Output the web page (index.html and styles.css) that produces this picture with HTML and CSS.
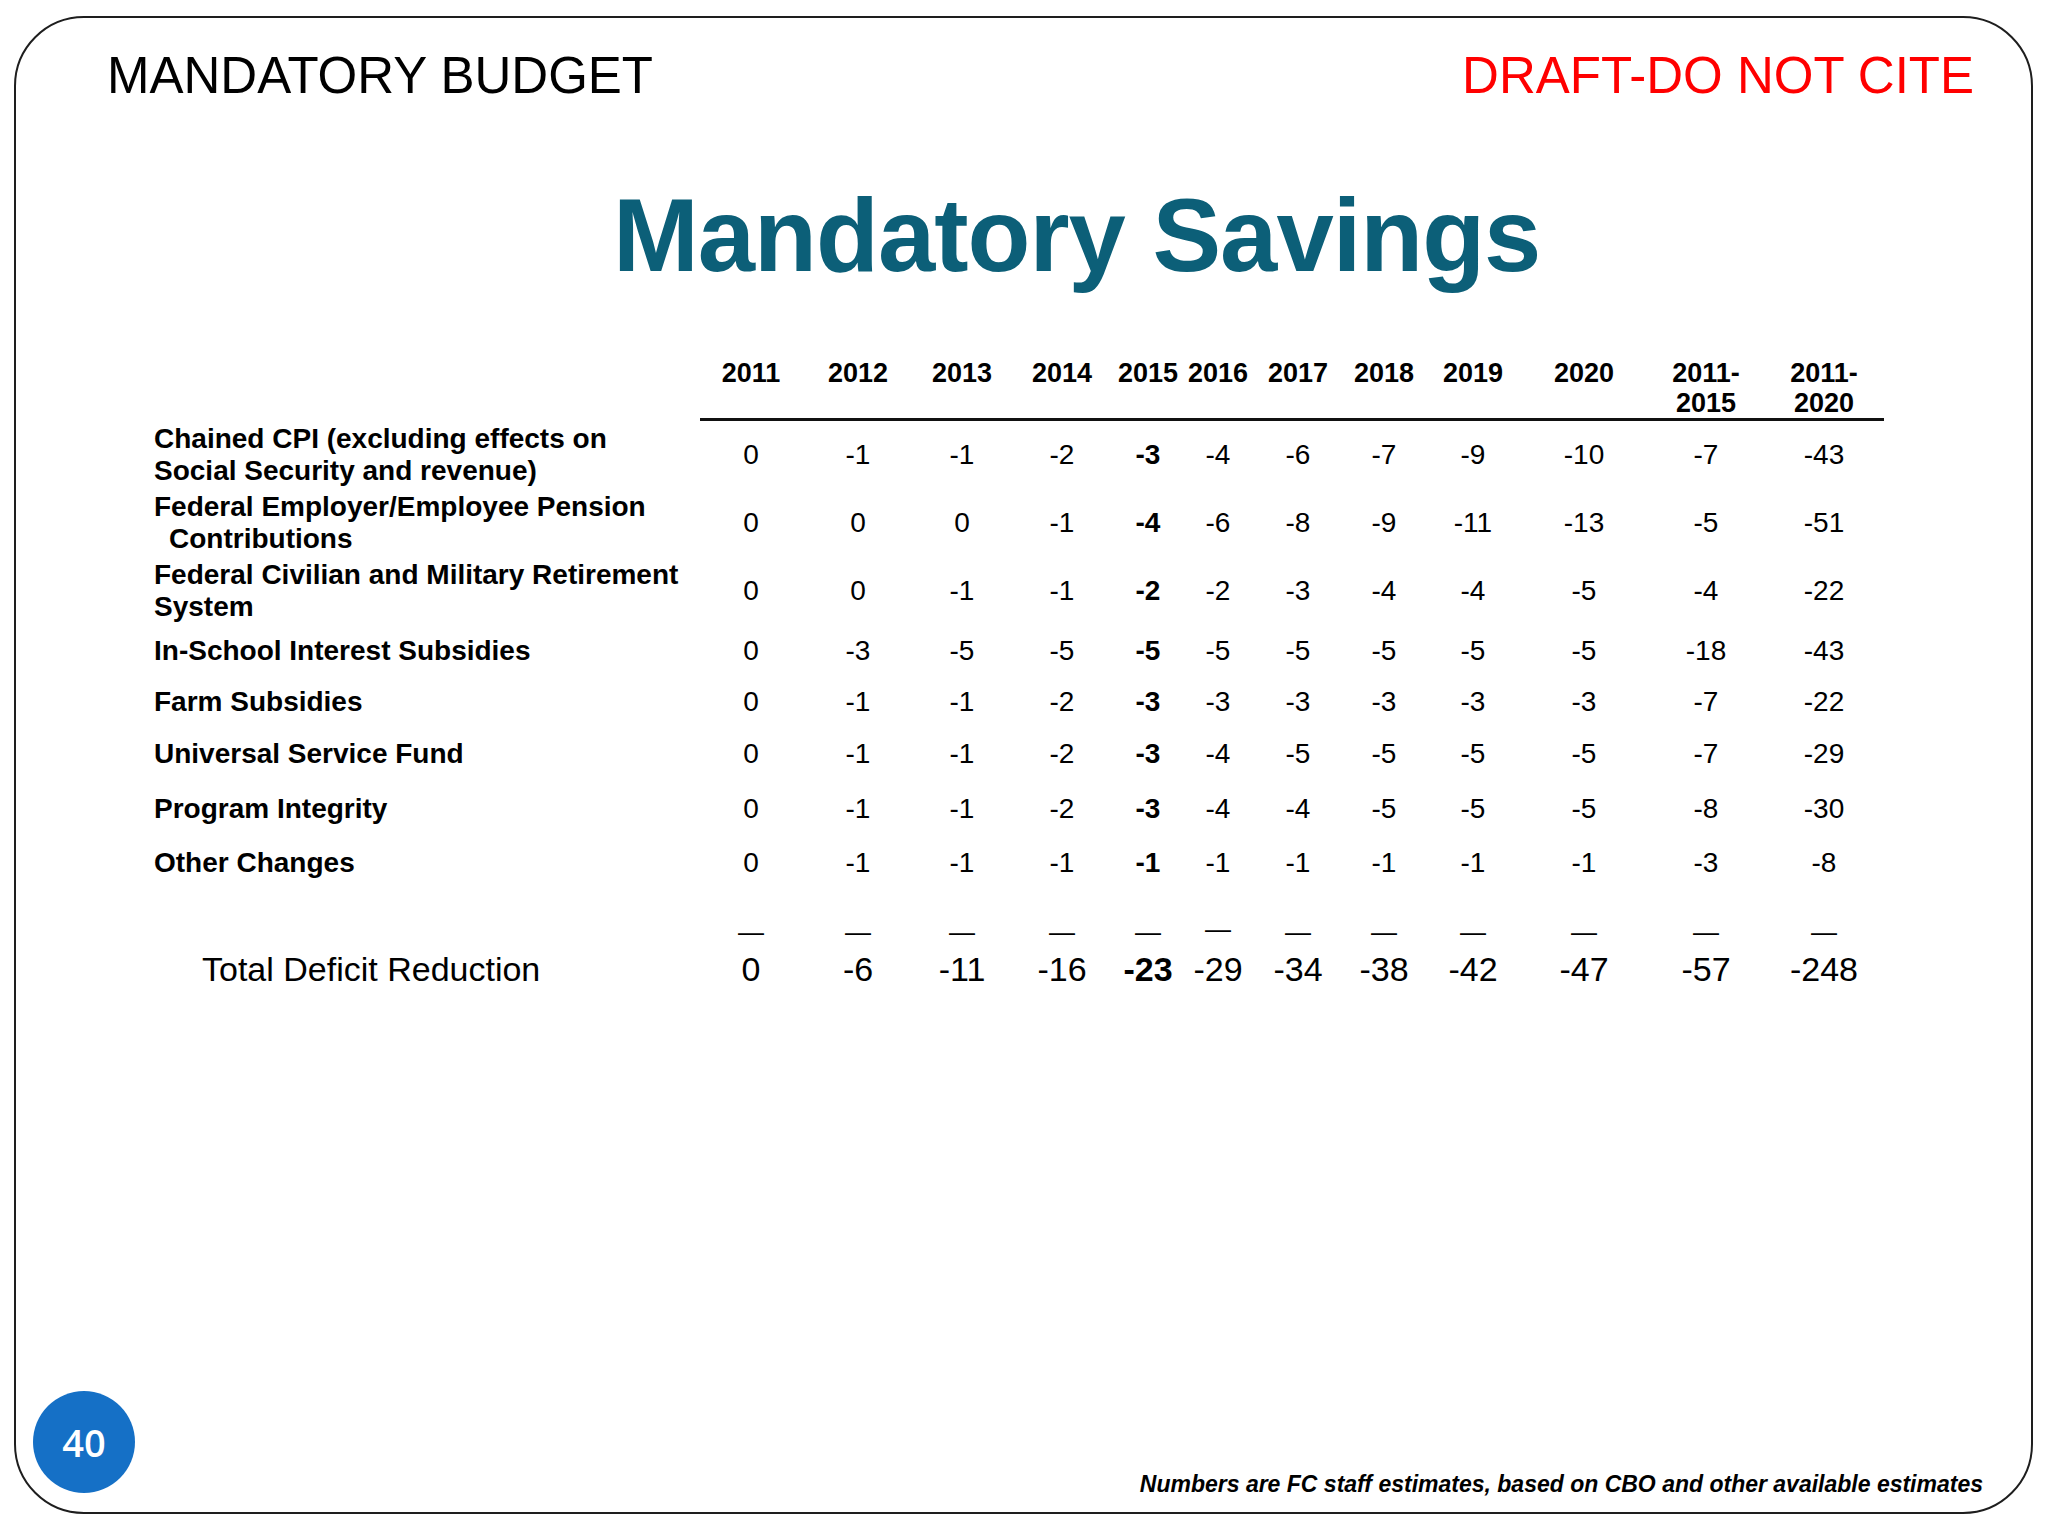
FILE: index.html
```html
<!DOCTYPE html>
<html lang="en">
<head>
<meta charset="utf-8">
<title>Mandatory Savings</title>
<link rel="stylesheet" href="styles.css">
</head>
<body>
<div class="slide">
  <div class="topbar">
    <div class="section">MANDATORY BUDGET</div>
    <div class="draft">DRAFT-DO NOT CITE</div>
  </div>
  <h1 class="title">Mandatory Savings</h1>

  <div class="table">
    <div class="row head">
      <div class="label"></div>
      <div class="hc">2011</div><div class="hc">2012</div><div class="hc">2013</div><div class="hc">2014</div>
      <div class="hc">2015</div><div class="hc">2016</div><div class="hc">2017</div><div class="hc">2018</div>
      <div class="hc">2019</div><div class="hc">2020</div><div class="hc">2011-<br>2015</div><div class="hc">2011-<br>2020</div>
    </div>

    <div class="row h68">
      <div class="label">Chained CPI (excluding effects on<br>Social Security and revenue)</div>
      <div class="v">0</div><div class="v">-1</div><div class="v">-1</div><div class="v">-2</div><div class="v b">-3</div><div class="v">-4</div><div class="v">-6</div><div class="v">-7</div><div class="v">-9</div><div class="v">-10</div><div class="v">-7</div><div class="v">-43</div>
    </div>
    <div class="row h68">
      <div class="label">Federal Employer/Employee Pension<br><span class="indent">Contributions</span></div>
      <div class="v">0</div><div class="v">0</div><div class="v">0</div><div class="v">-1</div><div class="v b">-4</div><div class="v">-6</div><div class="v">-8</div><div class="v">-9</div><div class="v">-11</div><div class="v">-13</div><div class="v">-5</div><div class="v">-51</div>
    </div>
    <div class="row h68">
      <div class="label">Federal Civilian and Military Retirement<br>System</div>
      <div class="v">0</div><div class="v">0</div><div class="v">-1</div><div class="v">-1</div><div class="v b">-2</div><div class="v">-2</div><div class="v">-3</div><div class="v">-4</div><div class="v">-4</div><div class="v">-5</div><div class="v">-4</div><div class="v">-22</div>
    </div>
    <div class="row h52">
      <div class="label">In-School Interest Subsidies</div>
      <div class="v">0</div><div class="v">-3</div><div class="v">-5</div><div class="v">-5</div><div class="v b">-5</div><div class="v">-5</div><div class="v">-5</div><div class="v">-5</div><div class="v">-5</div><div class="v">-5</div><div class="v">-18</div><div class="v">-43</div>
    </div>
    <div class="row h50">
      <div class="label">Farm Subsidies</div>
      <div class="v">0</div><div class="v">-1</div><div class="v">-1</div><div class="v">-2</div><div class="v b">-3</div><div class="v">-3</div><div class="v">-3</div><div class="v">-3</div><div class="v">-3</div><div class="v">-3</div><div class="v">-7</div><div class="v">-22</div>
    </div>
    <div class="row h54">
      <div class="label">Universal Service Fund</div>
      <div class="v">0</div><div class="v">-1</div><div class="v">-1</div><div class="v">-2</div><div class="v b">-3</div><div class="v">-4</div><div class="v">-5</div><div class="v">-5</div><div class="v">-5</div><div class="v">-5</div><div class="v">-7</div><div class="v">-29</div>
    </div>
    <div class="row h56">
      <div class="label">Program Integrity</div>
      <div class="v">0</div><div class="v">-1</div><div class="v">-1</div><div class="v">-2</div><div class="v b">-3</div><div class="v">-4</div><div class="v">-4</div><div class="v">-5</div><div class="v">-5</div><div class="v">-5</div><div class="v">-8</div><div class="v">-30</div>
    </div>
    <div class="row h52">
      <div class="label">Other Changes</div>
      <div class="v">0</div><div class="v">-1</div><div class="v">-1</div><div class="v">-1</div><div class="v b">-1</div><div class="v">-1</div><div class="v">-1</div><div class="v">-1</div><div class="v">-1</div><div class="v">-1</div><div class="v">-3</div><div class="v">-8</div>
    </div>

    <div class="row dashes">
      <div class="label"></div>
      <div class="d">—</div><div class="d">—</div><div class="d">—</div><div class="d">—</div><div class="d">—</div><div class="d up">—</div><div class="d">—</div><div class="d">—</div><div class="d">—</div><div class="d">—</div><div class="d">—</div><div class="d">—</div>
    </div>

    <div class="row total">
      <div class="label">Total Deficit Reduction</div>
      <div class="t">0</div><div class="t">-6</div><div class="t">-11</div><div class="t">-16</div><div class="t b">-23</div><div class="t">-29</div><div class="t">-34</div><div class="t">-38</div><div class="t">-42</div><div class="t">-47</div><div class="t">-57</div><div class="t">-248</div>
    </div>
  </div>

  <div class="footer">Numbers are FC staff estimates, based on CBO and other available estimates</div>
  <div class="pagenum">40</div>
</div>
</body>
</html>
```

FILE: styles.css
```css
html, body {
  margin: 0;
  padding: 0;
  background: #ffffff;
}

body {
  font-family: "Liberation Sans", Arial, sans-serif;
  color: #000;
}

.slide {
  position: relative;
  box-sizing: border-box;
  width: 2019px;
  height: 1498px;
  margin: 16px 0 0 14px;
  border: 2px solid #1e1e1e;
  border-radius: 70px;
  display: flex;
  flex-direction: column;
}

.topbar {
  display: flex;
  justify-content: space-between;
  padding: 28px 57px 0 91px;
  font-size: 51px;
  line-height: 60px;
}

.draft {
  color: #ff0000;
}

.title {
  margin: 70px 0 0 0;
  padding-left: 597px;
  font-size: 103px;
  letter-spacing: -1px;
  line-height: 120px;
  font-weight: bold;
  color: #0c5f78;
}

.table {
  margin: 62px 0 0 138px;
}

.row {
  display: grid;
  grid-template-columns: 546px 102px 112px 96px 104px 68px 72px 88px 84px 94px 128px 116px 120px;
  align-items: center;
  box-sizing: border-box;
}

.head {
  align-items: start;
}

.hc {
  font-weight: bold;
  font-size: 27px;
  line-height: 30px;
  height: 60px;
  text-align: center;
  border-bottom: 3px solid #111;
}

.label {
  font-weight: bold;
  font-size: 28px;
  line-height: 32px;
  white-space: nowrap;
}

.indent {
  padding-left: 15px;
}

.v {
  font-size: 28px;
  line-height: 30px;
  text-align: center;
}

.b {
  font-weight: bold;
}

.h68 { height: 68px; }
.h56 { height: 56px; }
.h54 { height: 54px; }
.h52 { height: 52px; }
.h50 { height: 50px; }

.dashes {
  height: 60px;
  align-items: start;
  padding-top: 28px;
}

.d {
  font-size: 26px;
  line-height: 30px;
  text-align: center;
}

.d.up {
  position: relative;
  top: -3px;
}

.total .label {
  font-weight: normal;
  font-size: 34px;
  line-height: 40px;
  padding-left: 48px;
}

.t {
  font-size: 34px;
  line-height: 40px;
  text-align: center;
}

.footer {
  margin-top: auto;
  padding: 0 48px 13px 0;
  text-align: right;
  font-size: 23px;
  line-height: 30px;
  font-weight: bold;
  font-style: italic;
}

.pagenum {
  position: absolute;
  left: 17px;
  bottom: 19px;
  width: 102px;
  height: 102px;
  border-radius: 50%;
  background: #1570c6;
  color: #fff;
  font-family: "Open Sans", "Noto Sans", sans-serif;
  font-weight: 600;
  font-size: 38px;
  line-height: 102px;
  text-align: center;
}
```
